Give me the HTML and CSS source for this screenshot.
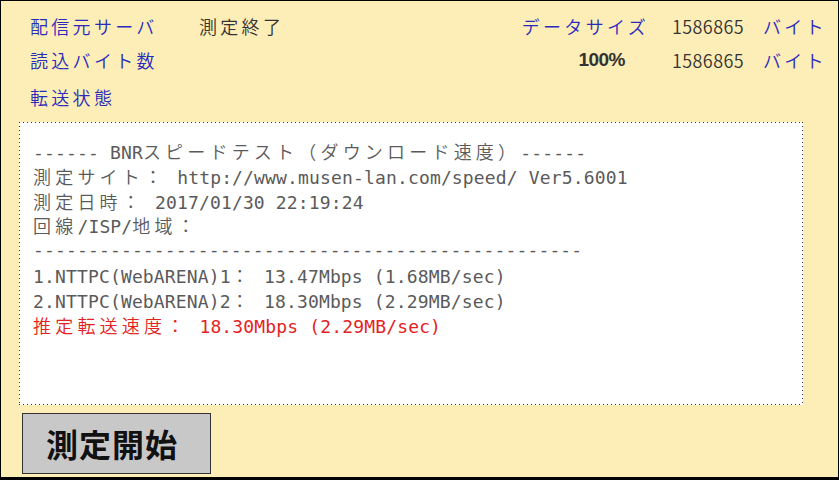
FILE: index.html
```html
<!DOCTYPE html>
<html lang="ja">
<head>
<meta charset="utf-8">
<link rel="stylesheet" href="styles.css">
</head>
<body>
<div class="page">
  <div class="header">
    <div class="label">配信元サーバ</div>
    <div class="value">測定終了</div>
    <div class="key">データサイズ</div>
    <div class="num">1586865</div>
    <div class="unit">バイト</div>

    <div class="label">読込バイト数</div>
    <div class="value"></div>
    <div class="pct">100%</div>
    <div class="num">1586865</div>
    <div class="unit">バイト</div>

    <div class="label">転送状態</div>
  </div>
  <div class="result">
    <div class="line">------ BNR<span class="j">スピードテスト（ダウンロード速度）</span>------</div>
    <div class="line"><span class="j">測定サイト：</span> http://www.musen-lan.com/speed/ Ver5.6001</div>
    <div class="line"><span class="j">測定日時：</span> 2017/01/30 22:19:24</div>
    <div class="line"><span class="j">回線</span>/ISP/<span class="j">地域：</span></div>
    <div class="line">--------------------------------------------------</div>
    <div class="line">1.NTTPC(WebARENA)1<span class="j">：</span> 13.47Mbps (1.68MB/sec)</div>
    <div class="line">2.NTTPC(WebARENA)2<span class="j">：</span> 18.30Mbps (2.29MB/sec)</div>
    <div class="line red"><span class="j">推定転送速度：</span> 18.30Mbps (2.29MB/sec)</div>
  </div>
  <div class="actions">
    <button class="start">測定開始</button>
  </div>
</div>
</body>
</html>
```
FILE: styles.css
```css
html, body {
  margin: 0;
  padding: 0;
  background: #fdedb6;
}
.page {
  width: 839px;
  height: 480px;
  box-sizing: border-box;
  border: 1px solid #000;
  border-bottom-width: 3px;
  background: #fdedb6;
  display: flex;
  flex-direction: column;
  font-family: "Noto Sans CJK JP", sans-serif;
}
.header {
  display: grid;
  grid-template-columns: 169px 299px 150px 115px 75px;
  grid-template-rows: 34px 34px 40px;
  align-items: center;
  padding: 8px 0 0 29px;
  font-size: 18px;
  line-height: 20px;
  font-weight: 350;
}
.label, .key, .unit {
  color: #2a2abd;
  letter-spacing: 3.3px;
  white-space: nowrap;
}
.value {
  color: #333;
  letter-spacing: 3.3px;
}
.key {
  justify-self: end;
  margin-right: -1px;
}
.pct {
  justify-self: end;
  margin-right: 23px;
  font-family: "Liberation Sans", sans-serif;
  font-weight: bold;
  font-size: 19px;
  color: #333;
  letter-spacing: -0.5px;
}
.num {
  padding-left: 24px;
  color: #333;
  letter-spacing: 0.4px;
}
.result {
  margin: 5px 35px 0 18px;
  height: 283px;
  box-sizing: border-box;
  padding: 17px 0 0 14px;
  background:
    linear-gradient(to right, #333 1px, transparent 1px) 0 0 / 4px 1px repeat-x,
    linear-gradient(to right, #333 1px, transparent 1px) 0 100% / 4px 1px repeat-x,
    linear-gradient(to bottom, #333 1px, transparent 1px) 0 0 / 1px 4px repeat-y,
    linear-gradient(to bottom, #333 1px, transparent 1px) 100% 0 / 1px 4px repeat-y,
    #fff;
  font-family: "DejaVu Sans Mono", "Noto Sans CJK JP", monospace;
  font-size: 18px;
  color: #5a5a5a;
}
.line {
  height: 24.8px;
  line-height: 24.8px;
  white-space: pre;
  letter-spacing: 0.15px;
}
.j {
  font-family: "Noto Sans CJK JP", sans-serif;
  font-weight: 350;
  letter-spacing: 4.2px;
}
.red {
  color: #e52222;
}
.actions {
  padding: 8px 0 0 21px;
}
.start {
  width: 189px;
  height: 61px;
  margin: 0;
  padding: 0 0 0 23px;
  text-align: left;
  border: 1px solid #333;
  background: #c8c8c8;
  font-family: "Noto Sans CJK JP", sans-serif;
  font-weight: bold;
  font-size: 32px;
  letter-spacing: 1px;
  color: #111;
  line-height: 59px;
}
```
